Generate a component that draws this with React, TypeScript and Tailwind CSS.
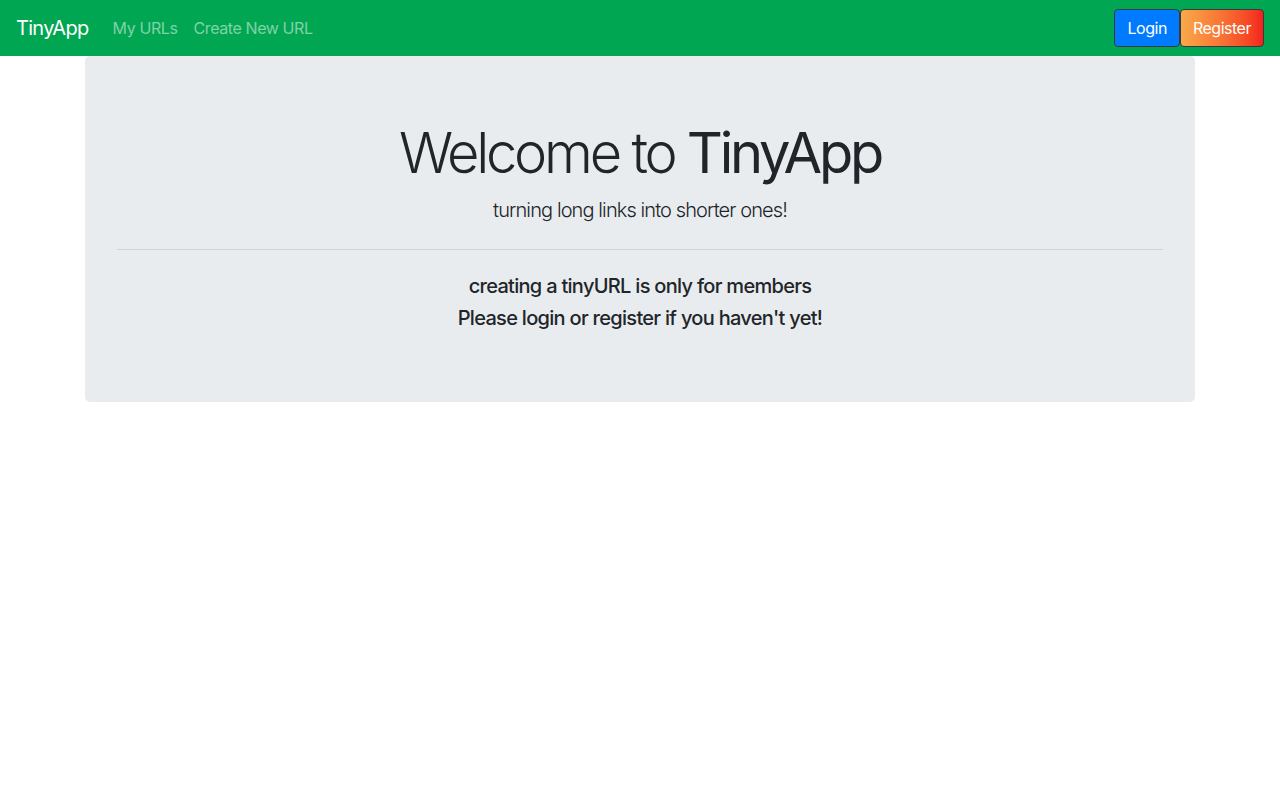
export default function App() {
  return (
    <div
      className="min-h-screen bg-white text-[#212529]"
      style={{ fontFamily: "Inter, 'Helvetica Neue', Arial, sans-serif" }}
    >
      <nav className="h-14 bg-[#00a651] px-4 flex items-center">
        <a className="text-white text-xl mr-4 leading-[30px] tracking-[-0.035em]">TinyApp</a>
        <div className="flex items-center tracking-[-0.025em]">
          <a className="px-2 py-2 text-white/50 text-base">My URLs</a>
          <a className="px-2 py-2 text-white/50 text-base">Create New URL</a>
        </div>
        <div className="ml-auto flex items-center tracking-[-0.03em]">
          <button className="h-[38px] px-3 rounded border border-[#343a40] bg-[#007bff] text-white text-base">
            Login
          </button>
          <button className="h-[38px] px-3 rounded border border-[#343a40] bg-gradient-to-r from-[#f9a94a] to-[#f2201c] text-white text-base">
            Register
          </button>
        </div>
      </nav>

      <div className="w-[1110px] mx-auto">
        <div className="bg-[#e9ecef] rounded-[5px] px-8 py-16 text-center">
          <h1 className="text-[56px] leading-[1.2] font-light mb-2 tracking-[-0.058em]">
            Welcome to <span className="font-normal">TinyApp</span>
          </h1>
          <p className="text-xl leading-[30px] font-light tracking-[-0.045em]">
            turning long links into shorter ones!
          </p>
          <hr className="my-6 border-t border-black/10" />
          <h5 className="text-xl leading-6 font-medium mb-2 tracking-[-0.035em]">
            creating a tinyURL is only for members
          </h5>
          <h5 className="text-xl leading-6 font-medium mb-2 tracking-[-0.035em]">
            Please login or register if you haven't yet!
          </h5>
        </div>
      </div>
    </div>
  );
}
